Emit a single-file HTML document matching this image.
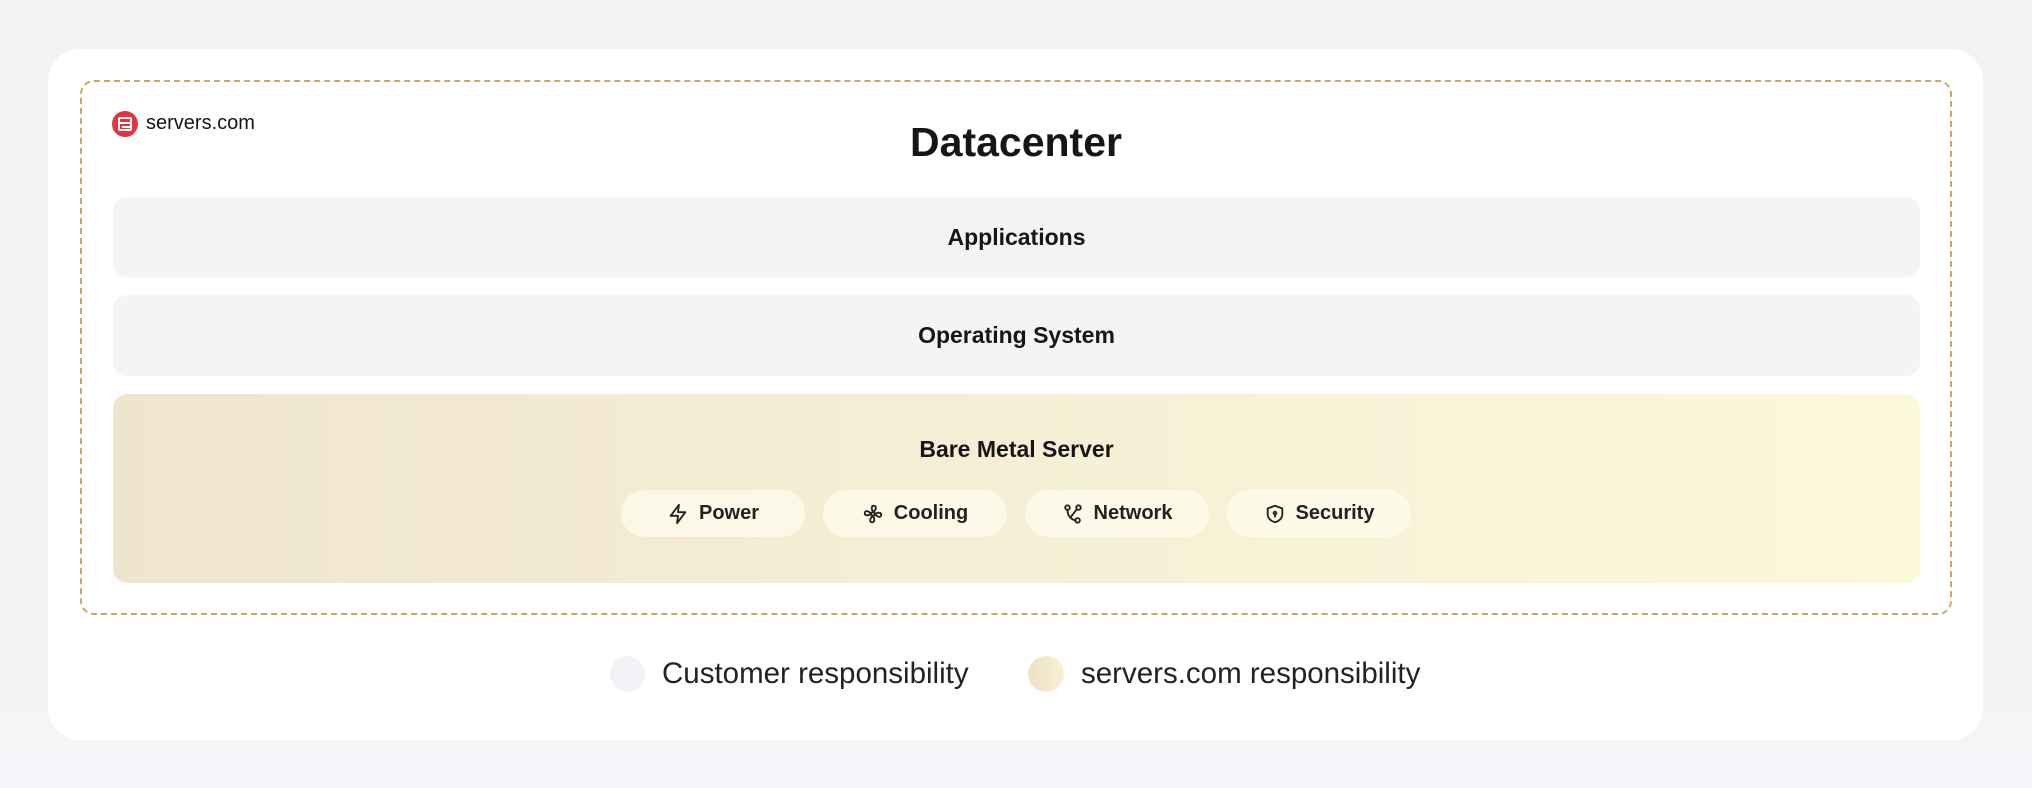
<!DOCTYPE html>
<html><head><style>
*{margin:0;padding:0;box-sizing:border-box}
body{width:2032px;height:788px;background:linear-gradient(180deg,#f3f3f3 60%,#f5f4f8);font-family:"Liberation Sans",sans-serif;color:#161616;position:relative;overflow:hidden}
.card{position:absolute;left:48px;top:49px;width:1935px;height:691px;background:#fff;border-radius:32px}
.dash{position:absolute;left:80px;top:80px;width:1872px;height:535px;border:2px dashed #c6aa62;border-radius:14px}
.bar{position:absolute;left:113px;width:1807px;border-radius:14px;background:#f4f4f4;display:flex;justify-content:center;font-weight:bold;font-size:23px}
.pill{position:absolute;top:490px;width:184px;height:47px;border-radius:24px;background:rgba(255,253,240,.7);display:flex;align-items:center;justify-content:center;gap:10px;font-size:20px;font-weight:bold;color:#222}
.pill svg{width:22px;height:22px;fill:none;stroke:#222;stroke-width:2;stroke-linecap:round;stroke-linejoin:round}
</style></head><body>
<div class="card"></div>
<div class="dash"></div>
<div style="position:absolute;left:112px;top:111px;width:26px;height:26px;border-radius:50%;background:#e5323f"></div>
<div style="position:absolute;left:118px;top:117px;width:14px;height:14px;border:2px solid #fff;border-radius:2px"><div style="position:absolute;left:0;top:3px;width:10px;height:2px;background:#fff"></div><div style="position:absolute;left:2px;top:7px;width:10px;height:2px;background:#fff"></div></div>
<div style="position:absolute;left:146px;top:112px;font-size:20px">servers.com</div>
<div style="position:absolute;left:0;width:2032px;top:119px;text-align:center;font-size:41px;font-weight:bold">Datacenter</div>
<div class="bar" style="top:197px;height:80px;line-height:80px">Applications</div>
<div class="bar" style="top:295px;height:81px;line-height:81px">Operating System</div>
<div class="bar" style="top:394px;height:189px;background:linear-gradient(90deg,#efe5cd,#f6efd5 50%,#fcf8db);padding-top:42px">Bare Metal Server</div>
<div class="pill" style="left:621px"><svg viewBox="0 0 24 24"><path d="M13 2 4 14h8l-1 8 9-12h-8z"/></svg>Power</div>
<div class="pill" style="left:823px"><svg viewBox="0 0 24 24"><circle cx="12" cy="12" r="2"/><path d="M12 10C10 6 10 3 13 3s3 4-1 7M14 12c4-2 7-2 7 1s-4 3-7-1M12 14c2 4 2 7-1 7s-3-4 1-7M10 12c-4 2-7 2-7-1s4-3 7 1"/></svg>Cooling</div>
<div class="pill" style="left:1025px"><svg viewBox="0 0 24 24"><circle cx="6" cy="5" r="2.5"/><circle cx="18" cy="5" r="2.5"/><circle cx="17" cy="19" r="2.5"/><path d="M6 8c0 6 4 10 9 11M16 7l-7 9"/></svg>Network</div>
<div class="pill" style="left:1227px"><svg viewBox="0 0 24 24"><path d="M12 3 4 6v6c0 5 4 8 8 9 4-1 8-4 8-9V6z"/><circle cx="12" cy="11" r="1.5"/><path d="M12 12.5V15"/></svg>Security</div>
<div style="position:absolute;left:610px;top:656px;width:35px;height:36px;border-radius:50%;background:#f3f3f7"></div>
<div style="position:absolute;left:662px;top:657px;font-size:29.5px;color:#222">Customer responsibility</div>
<div style="position:absolute;left:1028px;top:656px;width:36px;height:36px;border-radius:50%;background:linear-gradient(90deg,#ede2c3,#f7f0d4)"></div>
<div style="position:absolute;left:1081px;top:657px;font-size:29.5px;color:#222">servers.com responsibility</div>
</body></html>
